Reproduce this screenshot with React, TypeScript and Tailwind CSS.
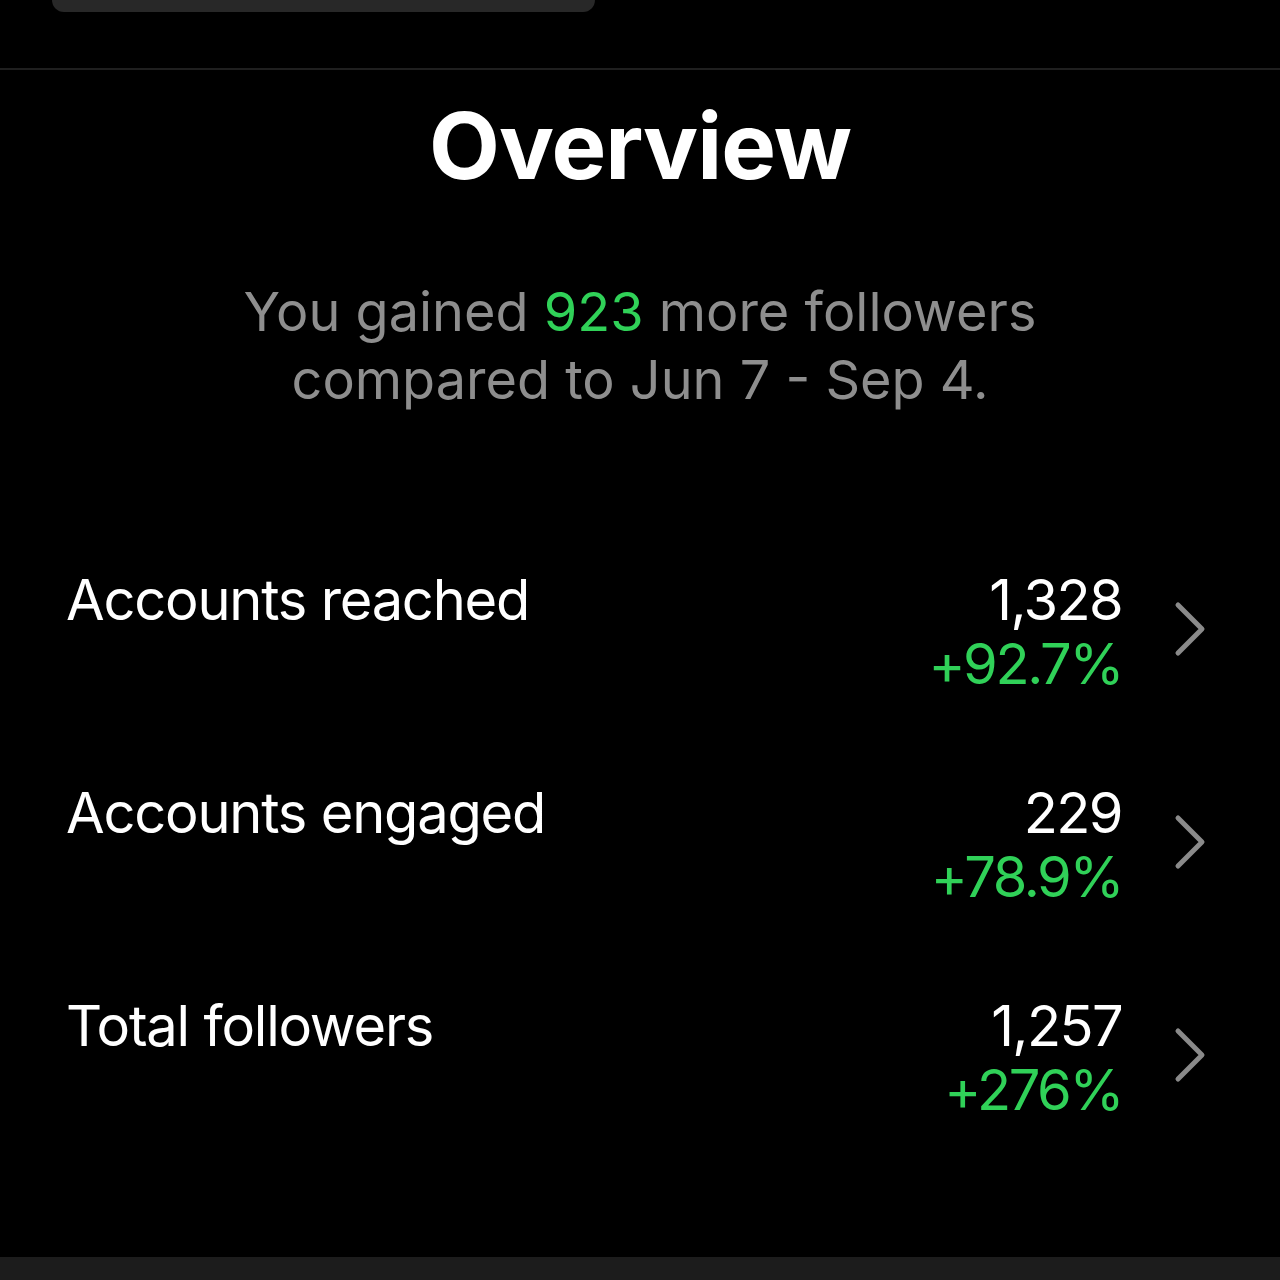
import React from "react";

const font = { fontFamily: "Inter, 'Noto Sans', sans-serif" };

function Chevron() {
  return (
    <svg width="36" height="56" viewBox="0 0 36 56" fill="none" className="shrink-0">
      <path d="M6 4 L30 28 L6 52" stroke="#8a8a8a" strokeWidth="5" strokeLinecap="round" strokeLinejoin="round" />
    </svg>
  );
}

function Row({ label, value, change }: { label: string; value: string; change: string }) {
  return (
    <div className="flex items-start pl-[66px] pr-[72px] h-[213px]">
      <div className="flex-1 text-white text-[56px] leading-[64px] tracking-[-1.2px]">{label}</div>
      <div className="flex flex-col items-end text-[56px] leading-[64px] tracking-[-1.6px]">
        <span className="text-white">{value}</span>
        <span className="text-[#30d158] tracking-[-2.4px]">{change}</span>
      </div>
      <div className="ml-[50px] mt-[33px]">
        <Chevron />
      </div>
    </div>
  );
}

export default function App() {
  return (
    <div className="w-[1280px] h-[1280px] bg-black flex flex-col overflow-hidden" style={font}>
      <div className="ml-[52px] w-[543px] h-[12px] bg-[#282828] rounded-b-[30px]" />
      <div className="mt-[56px] h-[2px] bg-[#1f1f1f]" />
      <div className="mt-[26px] text-center text-white font-bold text-[92px] leading-[100px] tracking-[-1px]">
        Overview
      </div>
      <div className="mt-[82px] text-center text-[#8e8e8e] text-[54px] leading-[68px] tracking-[0px]">
        You gained <span className="text-[#30d158]">923</span> more followers
        <br />
        compared to Jun 7 - Sep 4.
      </div>
      <div className="mt-[154px] flex flex-col">
        <Row label="Accounts reached" value="1,328" change="+92.7%" />
        <Row label="Accounts engaged" value="229" change="+78.9%" />
        <Row label="Total followers" value="1,257" change="+276%" />
      </div>
      <div className="mt-auto h-[23px] bg-[#1c1c1c]" />
    </div>
  );
}
